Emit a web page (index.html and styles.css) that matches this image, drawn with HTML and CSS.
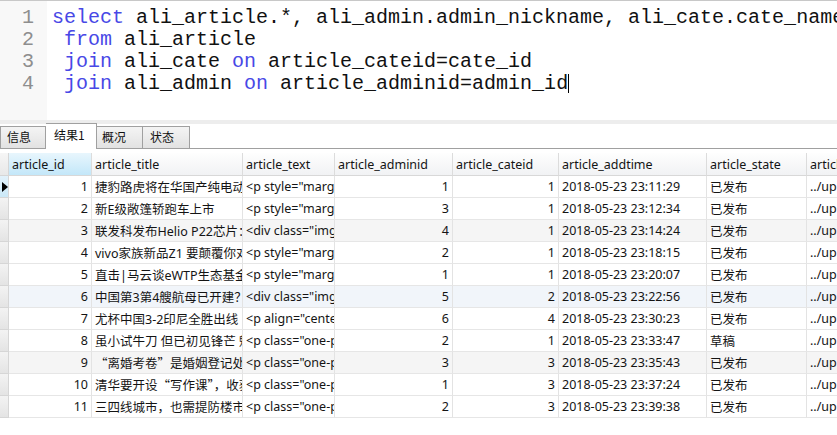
FILE: index.html
```html
<!DOCTYPE html>
<html lang="zh-CN">
<head>
<meta charset="utf-8">
<title>Query</title>
<link rel="stylesheet" href="styles.css">
</head>
<body>
<div class="app">
  <div class="editor">
    <div class="gutter">
      <div class="ln">1</div>
      <div class="ln">2</div>
      <div class="ln">3</div>
      <div class="ln">4</div>
    </div>
    <div class="code">
      <div class="line"><span class="kw">select</span> ali_article.*, ali_admin.admin_nickname, ali_cate.cate_name</div>
      <div class="line"> <span class="kw">from</span> ali_article</div>
      <div class="line"> <span class="kw">join</span> ali_cate <span class="kw">on</span> article_cateid=cate_id</div>
      <div class="line"> <span class="kw">join</span> ali_admin <span class="kw">on</span> article_adminid=admin_id<span class="caret"></span></div>
    </div>
  </div>
  <div class="splitter"></div>
  <div class="tabs">
    <div class="tab t1">信息</div>
    <div class="tab t2 active">结果1</div>
    <div class="tab t3">概况</div>
    <div class="tab t4">状态</div>
  </div>
  <div class="grid-wrap">
    <table class="grid">
      <colgroup>
        <col class="c-ind"><col class="c-id"><col class="c-title"><col class="c-text"><col class="c-admin"><col class="c-cate"><col class="c-time"><col class="c-state"><col class="c-last">
      </colgroup>
      <thead>
        <tr>
          <th class="ind"></th>
          <th class="sel">article_id</th>
          <th>article_title</th>
          <th>article_text</th>
          <th>article_adminid</th>
          <th>article_cateid</th>
          <th>article_addtime</th>
          <th>article_state</th>
          <th>article_pic</th>
        </tr>
      </thead>
      <tbody>
        <tr class="cur"><td class="ind"><span class="arrow"></span></td><td class="num">1</td><td>捷豹路虎将在华国产纯电动车</td><td>&lt;p style="margin</td><td class="num">1</td><td class="num">1</td><td>2018-05-23 23:11:29</td><td>已发布</td><td>../uploads/</td></tr>
        <tr><td class="ind"></td><td class="num">2</td><td>新E级敞篷轿跑车上市</td><td>&lt;p style="margin</td><td class="num">3</td><td class="num">1</td><td>2018-05-23 23:12:34</td><td>已发布</td><td>../uploads/</td></tr>
        <tr class="alt"><td class="ind"></td><td class="num">3</td><td>联发科发布Helio P22芯片：</td><td>&lt;div class="img</td><td class="num">4</td><td class="num">1</td><td>2018-05-23 23:14:24</td><td>已发布</td><td>../uploads/</td></tr>
        <tr><td class="ind"></td><td class="num">4</td><td>vivo家族新品Z1 要颠覆你对</td><td>&lt;p style="margin</td><td class="num">2</td><td class="num">1</td><td>2018-05-23 23:18:15</td><td>已发布</td><td>../uploads/</td></tr>
        <tr><td class="ind"></td><td class="num">5</td><td>直击|马云谈eWTP生态基金</td><td>&lt;p style="margin</td><td class="num">1</td><td class="num">1</td><td>2018-05-23 23:20:07</td><td>已发布</td><td>../uploads/</td></tr>
        <tr class="hov"><td class="ind"></td><td class="num">6</td><td>中国第3第4艘航母已开建？专家</td><td>&lt;div class="img</td><td class="num">5</td><td class="num">2</td><td>2018-05-23 23:22:56</td><td>已发布</td><td>../uploads/</td></tr>
        <tr><td class="ind"></td><td class="num">7</td><td>尤杯中国3-2印尼全胜出线 队</td><td>&lt;p align="center</td><td class="num">6</td><td class="num">4</td><td>2018-05-23 23:30:23</td><td>已发布</td><td>../uploads/</td></tr>
        <tr><td class="ind"></td><td class="num">8</td><td>虽小试牛刀 但已初见锋芒 魅</td><td>&lt;p class="one-p</td><td class="num">2</td><td class="num">1</td><td>2018-05-23 23:33:47</td><td>草稿</td><td>../uploads/</td></tr>
        <tr class="alt"><td class="ind"></td><td class="num">9</td><td><span class="q">“</span>离婚考卷<span class="q">”</span>是婚姻登记处班</td><td>&lt;p class="one-p</td><td class="num">3</td><td class="num">3</td><td>2018-05-23 23:35:43</td><td>已发布</td><td>../uploads/</td></tr>
        <tr><td class="ind"></td><td class="num">10</td><td>清华要开设<span class="q">“</span>写作课<span class="q">”</span>，收获</td><td>&lt;p class="one-p</td><td class="num">1</td><td class="num">3</td><td>2018-05-23 23:37:24</td><td>已发布</td><td>../uploads/</td></tr>
        <tr><td class="ind"></td><td class="num">11</td><td>三四线城市，也需提防楼市 </td><td>&lt;p class="one-p</td><td class="num">2</td><td class="num">3</td><td>2018-05-23 23:39:38</td><td>已发布</td><td>../uploads/</td></tr>
      </tbody>
    </table>
  </div>
</div>
</body>
</html>
```

FILE: styles.css
```css
* { box-sizing: border-box; }
html, body { margin: 0; padding: 0; background: #ffffff; }
body { width: 837px; height: 435px; overflow: hidden; }

.app { width: 837px; height: 435px; display: flex; flex-direction: column; }

.editor {
  height: 120px;
  flex-shrink: 0;
  display: flex;
  overflow: hidden;
  border-top: 1px solid #c8c8c8;
  font-family: "Liberation Mono", "Courier New", monospace;
  font-size: 20px;
  color: #111111;
}
.gutter {
  width: 47px;
  flex-shrink: 0;
  background: #f8f8f8;
  padding-top: 6px;
  padding-right: 13px;
  text-align: right;
  color: #8e8e8e;
}
.ln { height: 22px; line-height: 22px; }
.code { flex: 1; min-width: 0; overflow: hidden; padding-top: 6px; padding-left: 5px; }
.line { height: 22px; line-height: 22px; white-space: pre; }
.kw { color: #4848e6; }
.caret {
  display: inline-block;
  width: 1px;
  height: 19px;
  background: #000000;
  vertical-align: -4px;
}

.splitter { height: 4px; flex-shrink: 0; background: #ededed; }

.tabs {
  height: 25px;
  flex-shrink: 0;
  display: flex;
  align-items: flex-end;
  border-bottom: 1px solid #a0a0a0;
  font-family: "Noto Sans CJK SC", "Noto Sans", sans-serif;
  font-size: 12px;
  color: #111111;
}
.tab {
  height: 22px;
  line-height: 20px;
  border: 1px solid #a0a0a0;
  border-bottom: none;
  border-left: none;
  background: linear-gradient(#f4f4f4, #e2e2e2);
  padding-left: 6px;
}
.t1 { width: 46px; border-left: 1px solid #a0a0a0; }
.t3 { width: 46px; padding-left: 5px; }
.t4 { width: 47px; padding-left: 7px; }
.tab.active {
  width: 51px;
  height: 26px;
  line-height: 21px;
  background: #ffffff;
  margin-bottom: -1px;
  padding-left: 8px;
  position: relative;
}

.grid-wrap { margin-top: 4px; overflow: hidden; width: 837px; }
.grid {
  border-collapse: separate;
  border-spacing: 0;
  table-layout: fixed;
  width: 880px;
  font-family: "Noto Sans", "Noto Sans CJK SC", sans-serif;
  font-size: 12.5px;
  color: #141414;
}
.c-ind { width: 9px; }
.c-id { width: 83px; }
.c-title { width: 151px; }
.c-text { width: 92px; }
.c-admin { width: 118px; }
.c-cate { width: 106px; }
.c-time { width: 148px; }
.c-state { width: 100px; }
.c-last { width: 73px; }

.grid th, .grid td {
  overflow: hidden;
  white-space: nowrap;
  text-overflow: clip;
  padding: 0 4px 0 3px;
  border-right: 1px solid #e3e3e3;
  border-bottom: 1px solid #e6e6e6;
  text-align: left;
  font-weight: normal;
}
.grid .q { font-family: "Noto Sans CJK SC", sans-serif; }
.grid thead tr { height: 23px; }
.grid th {
  background: linear-gradient(#fefefe, #f1f2f4);
  border-bottom: 1px solid #d8d8d8;
  border-right: 1px solid #dcdcdc;
  padding-left: 3px;
}
.grid th.sel { background: linear-gradient(#e8f6fd, #c3e7f9); }
.grid tbody tr { height: 22px; }
.grid td.num { text-align: right; padding-right: 3px; }
.grid .ind {
  padding: 0;
  background: linear-gradient(#f3f3f3, #e4e4e4);
  border-right: 1px solid #d6d6d6;
  border-bottom: 1px solid #d6d6d6;
}
.grid th.ind { background: linear-gradient(#f6f6f6, #e8e8e8); }
.grid tr.cur td.ind { background: linear-gradient(#e2f2fb, #cbe8f7); }
.arrow {
  display: block;
  width: 0;
  height: 0;
  margin-left: 2px;
  border-top: 5px solid transparent;
  border-bottom: 5px solid transparent;
  border-left: 6px solid #000000;
}
.grid tr.alt td { background: #f5f5f5; }
.grid tr.hov td { background: #f1f5fa; }
.grid tr.alt td.ind, .grid tr.hov td.ind { background: linear-gradient(#f3f3f3, #e4e4e4); }
```
